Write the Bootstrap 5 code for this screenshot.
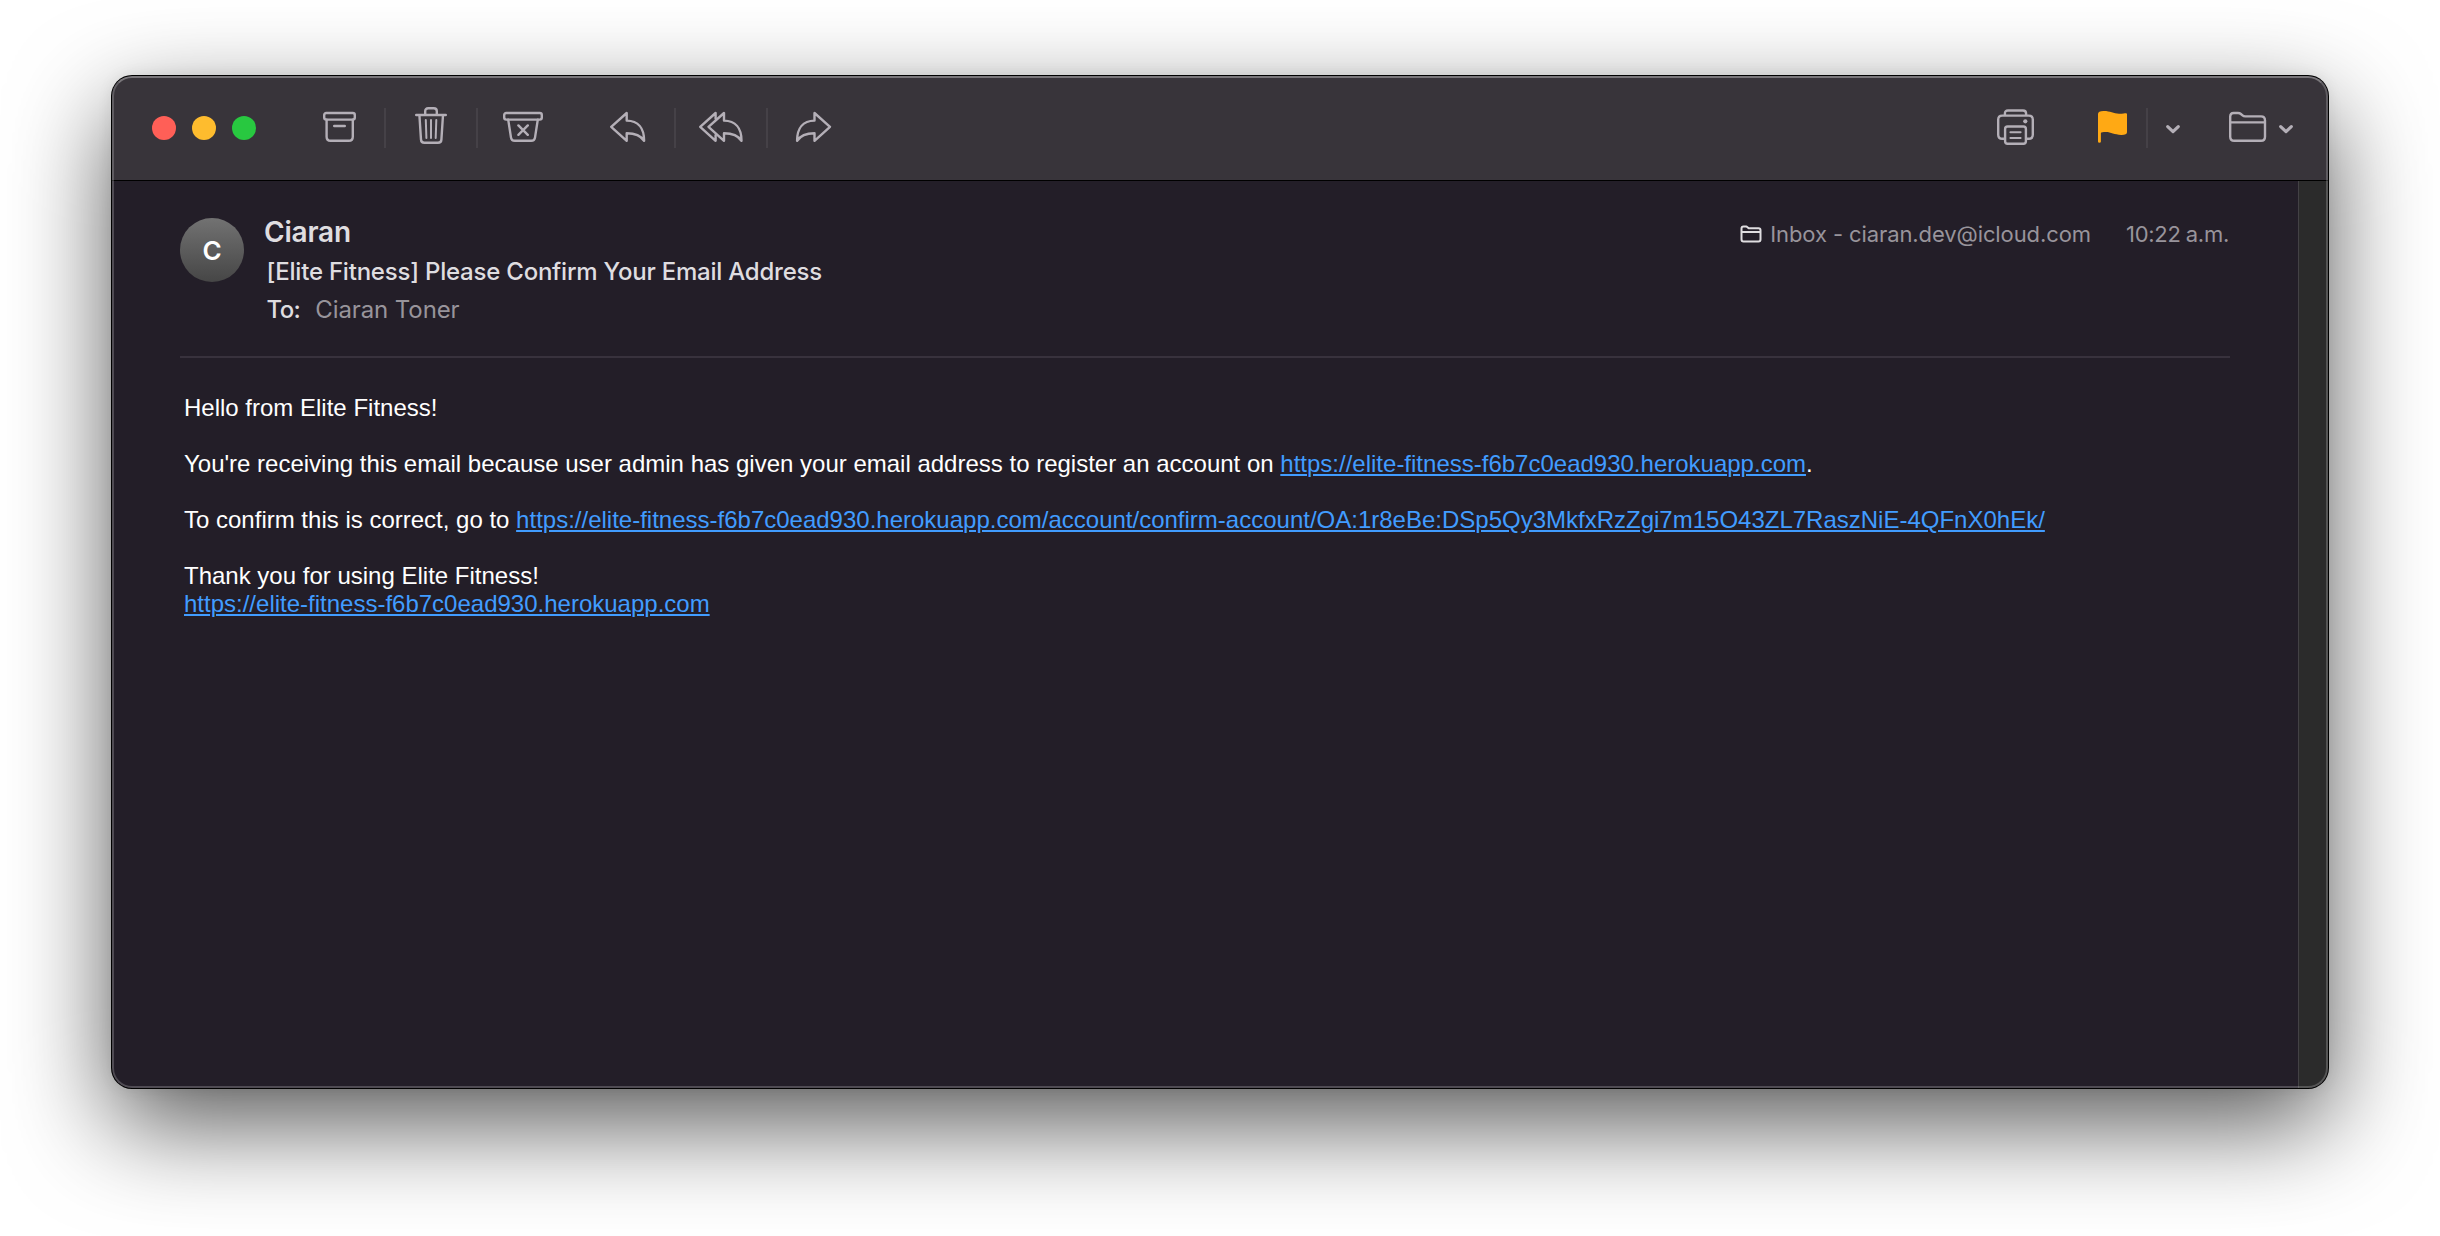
<!DOCTYPE html>
<html lang="en">
<head>
<meta charset="utf-8">
<title>Mail</title>
<link rel="stylesheet" href="https://cdn.jsdelivr.net/npm/bootstrap@5.3.0/dist/css/bootstrap.min.css">
<style>
body{background:#fff;overflow:hidden;font-family:Inter,"Open Sans",sans-serif}
.stage{width:2440px;height:1236px;padding:76px 112px 148px;overflow:hidden}
.mail-window{height:1012px;border-radius:20px;background:#231e28;overflow:hidden;box-shadow:0 0 0 1px #000,0 36px 100px rgba(0,0,0,.66),0 0 16px rgba(0,0,0,.08);position:relative}
.mail-window::after{content:"";position:absolute;inset:0;border-radius:20px;border:2px solid rgba(255,255,255,.2);border-top-color:rgba(255,255,255,.33);pointer-events:none}
.toolbar{height:105px;background:#38343a;border-bottom:1px solid #000;padding:0 28px 0 40px}
.light{width:24px;height:24px;border-radius:50%;margin-right:16px}
.light-close{background:#ff5f57}
.light-min{background:#febc2e}
.light-max{background:#28c840}
.tool{color:#b4afb7}
.glyph{display:block;fill:none;stroke:currentColor;stroke-width:2.4;stroke-linejoin:round;stroke-linecap:round}
.thin{stroke-width:2}
.thick{stroke-width:3.2}
.sep{width:2px;height:40px;background:#454147}
.first-tool{margin-left:22px}
.reply-group{margin-left:16px}
.flag-tool{margin-left:40px;color:#ffa914}
.move-tool{margin-left:26px}
.message{padding:37px 68px 0 68px}
.scroller{width:30px;background:#2b2b2b;border-left:1px solid #434145}
.avatar{width:64px;height:64px;background:linear-gradient(#727272,#464646);color:#fff;font-size:26px;font-weight:600}
.head{height:140px;border-bottom:2px solid #38323d;color:#dfdde0}
.who{margin:-5px 0 0 20px}
.sender{font-size:28px;font-weight:600;line-height:38px;letter-spacing:-.2px;margin-bottom:2px}
.subject,.dest{font-size:24px;line-height:38px;padding-left:2.5px}
.subject{font-weight:500;letter-spacing:-.22px}
.dest{gap:15px}
.dest-label{font-weight:500;letter-spacing:-.6px}
.meta{font-size:22px;line-height:30px;color:#98949b;margin-top:1px;padding-right:1px}
.mailbox{letter-spacing:-.1px;margin-left:8px}
.time{margin-left:35px;gap:5px;letter-spacing:-.25px}
.muted{color:#98949b;letter-spacing:-.1px}
.meta .glyph{color:#dfdde0;stroke-width:2}
.letter{font:24px/28px "Liberation Sans",sans-serif;color:#fff;padding:36px 4px;white-space:nowrap}
.letter p{margin:0 0 28px}
.letter a{color:#419cff;text-decoration:underline;text-decoration-thickness:2px;text-underline-offset:2px}
</style>
<script src="https://cdn.jsdelivr.net/npm/bootstrap@5.3.0/dist/js/bootstrap.bundle.min.js"></script>
</head>
<body>
<div class="stage">
<main class="mail-window d-flex flex-column">
<header class="toolbar d-flex align-items-center flex-shrink-0">
  <i class="light light-close"></i><i class="light light-min"></i><i class="light light-max"></i>
  <div class="tool first-tool"><svg class="glyph" width="90" height="40"><rect x="30.2" y="5" width="30.6" height="6.6" rx="2"/><path d="M32.6 11.6V28.8Q32.6 32.8 36.6 32.8H54.8Q58.8 32.8 58.8 28.8V11.6M40.2 18H50.8"/></svg></div>
  <i class="sep"></i>
  <div class="tool"><svg class="glyph overflow-visible" width="90" height="40"><path d="M30.2 7H59.8M39.2 7V3.2Q39.2.3 42.2.3H47.8Q50.8.3 50.8 3.2V7M33.4 7L35 31.6Q35.2 34.8 38.4 34.8H52Q55.2 34.8 55.4 31.6L57 7"/><path class="thin" d="M39.8 12L40.4 30M45 12V30M50.3 12L49.7 30"/></svg></div>
  <i class="sep"></i>
  <div class="tool"><svg class="glyph" width="90" height="40"><rect x="26.2" y="5" width="37.6" height="6.6" rx="2"/><path d="M30.2 11.6L33 29.6Q33.5 32.8 36.8 32.8H53.2Q56.5 32.8 57 29.6L59.8 11.6M40.4 17.4L49.8 26.8M49.8 17.4L40.4 26.8"/></svg></div>
  <div class="tool reply-group"><svg class="glyph" width="90" height="40"><path d="M27.2 18.9L42.7 5V12.6C54 12.8 60.2 20 60.1 32.8C56.5 27 51 25.2 42.7 25.2V32.8Z"/></svg></div>
  <i class="sep"></i>
  <div class="tool"><svg class="glyph" width="90" height="40"><path d="M32.5 18.9L48 5V12.6C59.3 12.8 65.6 20 65.5 32.8C61.9 27 56.3 25.2 48 25.2V32.8Z"/><path d="M39.6 10.5V5L24.2 18.9L39.6 32.8V27.3"/></svg></div>
  <i class="sep"></i>
  <div class="tool"><svg class="glyph" width="90" height="40"><path d="M62 18.9L46.5 5V12.6C35.2 12.8 29 20 29.1 32.8C32.7 27 38.2 25.2 46.5 25.2V32.8Z"/></svg></div>

  <div class="tool ms-auto"><svg class="glyph" width="50" height="40"><path d="M14.9 7.2V5.6Q14.9 2.5 18 2.5H33Q36.1 2.5 36.1 5.6V7.2M14 30.8H12.2Q8.2 30.8 8.2 26.8V11.6Q8.2 7.6 12.2 7.6H38.8Q42.8 7.6 42.8 11.6V26.8Q42.8 30.8 38.8 30.8H37"/><rect x="15.1" y="18.5" width="20.8" height="17.3" rx="2.5"/><path class="thin" d="M20.4 24.3H30.6M20.4 30H30.6"/><circle cx="35.3" cy="13.3" r="2.1" fill="currentColor" stroke="none"/></svg></div>
  <div class="tool flag-tool"><svg class="d-block" width="66" height="40" fill="currentColor"><path d="M18 6Q18 3.3 23.5 3.1C30 3 33.5 5.8 39 5.8C43 5.8 44.8 5.2 46 5.2Q47 5.2 47 6.4V24.2Q47 26.8 41.5 26.9C34.5 27 31 24.1 26 24.1C23 24.1 21.3 24.4 20.9 24.7V33.4Q20.9 34.8 19.4 34.8Q18 34.8 18 33.4Z"/></svg></div>
  <i class="sep"></i>
  <div class="tool"><svg class="glyph thick" width="50" height="40"><path d="M19.7 18.6L25 23.6L30.3 18.6"/></svg></div>
  <div class="tool move-tool"><svg class="glyph" width="76" height="40"><path d="M6.2 28.8V8.5Q6.2 5 9.7 5H14Q15.7 5 16.9 6L18.5 7.4Q19.6 8.4 21.3 8.4H37Q41 8.4 41 12.4V28.8Q41 32.8 37 32.8H10.2Q6.2 32.8 6.2 28.8ZM6.2 14.4H41"/><path class="thick" d="M56.7 18.6L62 23.6L67.3 18.6"/></svg></div>
</header>
<div class="d-flex flex-grow-1">
  <section class="message flex-grow-1">
    <div class="head d-flex align-items-start">
      <div class="avatar rounded-circle d-flex align-items-center justify-content-center">C</div>
      <div class="who">
        <div class="sender">Ciaran</div>
        <div class="subject">[Elite Fitness] Please Confirm Your Email Address</div>
        <div class="dest d-flex"><span class="dest-label">To:</span><span class="muted">Ciaran Toner</span></div>
      </div>
      <div class="meta ms-auto d-flex align-items-center">
        <svg class="glyph" width="22" height="18"><path d="M1.5 14.2V3.4Q1.5 1.4 3.5 1.4H6.5L8.7 3.3H18.5Q20.5 3.3 20.5 5.3V14.2Q20.5 16.4 18.5 16.4H3.5Q1.5 16.4 1.5 14.2ZM1.5 7H20.5"/></svg>
        <span class="mailbox">Inbox - ciaran.dev@icloud.com</span>
        <span class="time d-flex"><span>10:22</span><span>a.m.</span></span>
      </div>
    </div>
    <article class="letter">
      <p>Hello from Elite Fitness!</p>
      <p>You're receiving this email because user admin has given your email address to register an account on <a href="#">https://elite-fitness-f6b7c0ead930.herokuapp.com</a>.</p>
      <p>To confirm this is correct, go to <a href="#">https://elite-fitness-f6b7c0ead930.herokuapp.com/account/confirm-account/OA:1r8eBe:DSp5Qy3MkfxRzZgi7m15O43ZL7RaszNiE-4QFnX0hEk/</a></p>
      <p>Thank you for using Elite Fitness!<br><a href="#">https://elite-fitness-f6b7c0ead930.herokuapp.com</a></p>
    </article>
  </section>
  <aside class="scroller"></aside>
</div>
</main>
</div>
</body></html>
